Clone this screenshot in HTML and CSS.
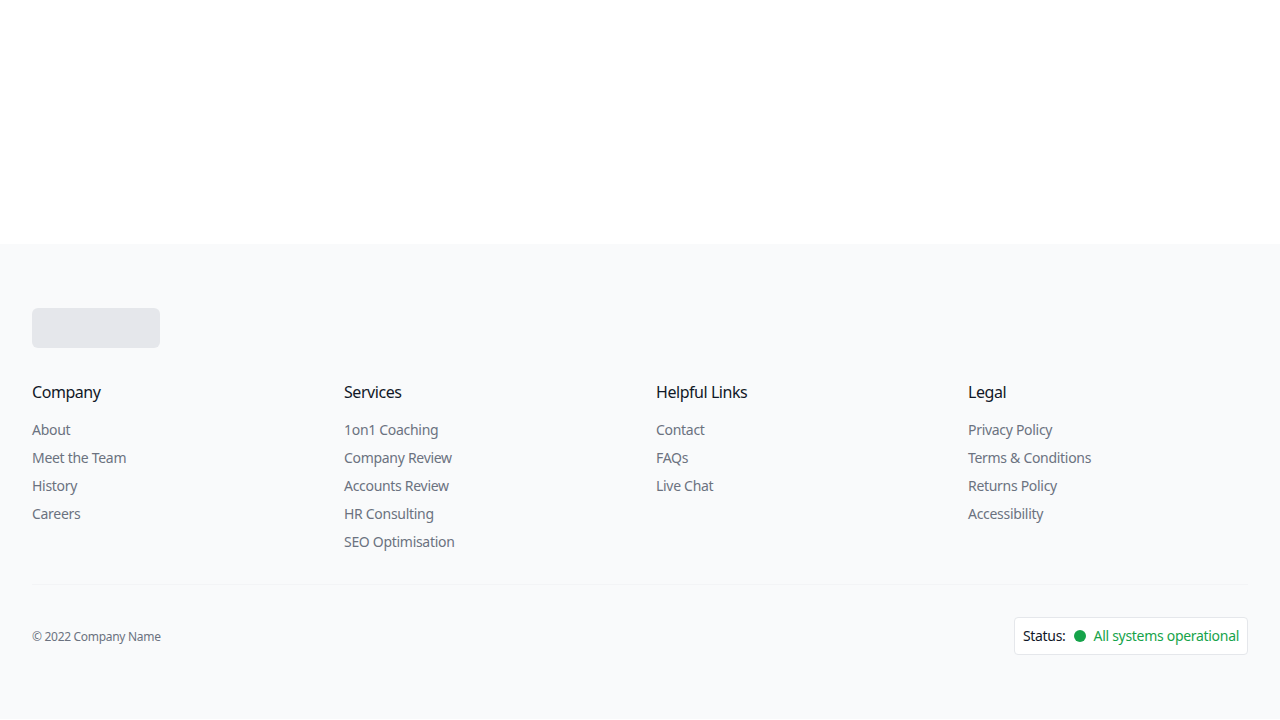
FILE: index.html
```html
<!DOCTYPE html>
<html lang="en">
<head>
    <meta charset="UTF-8">
    <meta name="viewport" content="width=device-width, initial-scale=1.0">
    <title>Footer</title>
    <link rel="stylesheet" href="styles.css">
</head>
<body>

<div class="page"></div>

<footer class="footer">
    <div class="logo"></div>

    <div class="columns">
        <div class="column">
            <h3>Company</h3>
            <a href="#">About</a>
            <a href="#">Meet the Team</a>
            <a href="#">History</a>
            <a href="#">Careers</a>
        </div>
        <div class="column">
            <h3>Services</h3>
            <a href="#">1on1 Coaching</a>
            <a href="#">Company Review</a>
            <a href="#">Accounts Review</a>
            <a href="#">HR Consulting</a>
            <a href="#">SEO Optimisation</a>
        </div>
        <div class="column">
            <h3>Helpful Links</h3>
            <a href="#">Contact</a>
            <a href="#">FAQs</a>
            <a href="#">Live Chat</a>
        </div>
        <div class="column">
            <h3>Legal</h3>
            <a href="#">Privacy Policy</a>
            <a href="#">Terms &amp; Conditions</a>
            <a href="#">Returns Policy</a>
            <a href="#">Accessibility</a>
        </div>
    </div>

    <div class="bottom">
        <p class="copyright">&copy; 2022 Company Name</p>
        <div class="status">
            <span class="status-label">Status:</span>
            <span class="dot"></span>
            <span class="status-text">All systems operational</span>
        </div>
    </div>
</footer>

</body>
</html>
```

FILE: styles.css
```css
body {
    font-family: "Noto Sans", sans-serif;
    letter-spacing: -0.3px;
    margin: 0;
    padding: 0;
    background-color: #ffffff;
}
.page {
    height: 244px;
}
.footer {
    background-color: #f9fafb;
    padding: 64px 32px;
}
.logo {
    width: 128px;
    height: 40px;
    background-color: #e5e7eb;
    border-radius: 6px;
}
.columns {
    display: grid;
    grid-template-columns: repeat(4, 1fr);
    gap: 32px;
    margin-top: 32px;
}
.column {
    display: flex;
    flex-direction: column;
    gap: 8px;
}
.column h3 {
    margin: 0 0 8px;
    font-size: 16px;
    line-height: 24px;
    font-weight: 400;
    letter-spacing: -0.45px;
    color: #111827;
}
.column a {
    font-size: 14px;
    line-height: 20px;
    color: #6b7280;
    text-decoration: none;
}
.bottom {
    margin-top: 32px;
    padding-top: 32px;
    border-top: 1px solid #f3f4f6;
    display: flex;
    justify-content: space-between;
    align-items: center;
}
.copyright {
    margin: 2px 0 0;
    font-size: 12px;
    line-height: 16px;
    color: #6b7280;
}
.status {
    display: flex;
    align-items: center;
    padding: 8px;
    border: 1px solid #e5e7eb;
    border-radius: 4px;
    background-color: #ffffff;
    font-size: 14px;
    line-height: 20px;
}
.status-label {
    color: #111827;
}
.dot {
    width: 12px;
    height: 12px;
    border-radius: 50%;
    background-color: #16a34a;
    margin: 0 8px;
}
.status-text {
    color: #16a34a;
}
```
